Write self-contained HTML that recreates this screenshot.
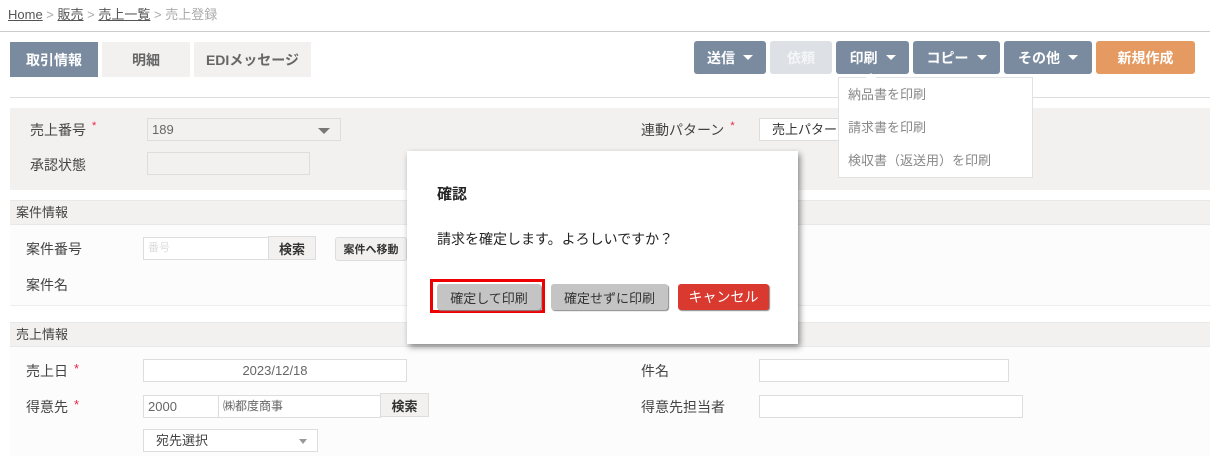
<!DOCTYPE html>
<html><head><meta charset="utf-8"><style>
*{box-sizing:border-box;margin:0;padding:0}
body{width:1210px;height:456px;background:#fff;font-family:"Liberation Sans","Noto Sans CJK JP",sans-serif;font-size:13px;color:#333;position:relative;overflow:hidden}
.a{position:absolute;white-space:nowrap}
.btn{position:absolute;height:33px;border-radius:3px;color:#fff;font-weight:bold;font-size:14px;display:flex;align-items:center;justify-content:center;background:#7a8ba0}
.car{display:inline-block;width:0;height:0;border-left:5px solid transparent;border-right:5px solid transparent;border-top:5px solid #fff;margin-left:8px}
.inp{position:absolute;background:#fff;border:1px solid #ddd;height:23px;font-size:13px;color:#777;padding-left:4px;line-height:21px;white-space:nowrap;overflow:hidden}
.sb{position:absolute;background:#f2f1f0;border:1px solid #ddd;height:24px;font-weight:bold;font-size:13px;display:flex;align-items:center;justify-content:center;color:#333}
.lbl{position:absolute;font-size:14px;color:#444}
.req{color:#e24;font-size:11px;margin-left:6px;vertical-align:top}
.hdr{position:absolute;left:10px;width:1200px;height:25px;background:#f2f1f0;border-top:1px solid #e8e8e8;border-bottom:1px solid #e8e8e8;padding-left:6px;line-height:24px;font-size:13px;color:#444}
.dbtn{position:absolute;height:26px;border-radius:3px;display:flex;align-items:center;justify-content:center;font-size:13px;box-shadow:1px 1px 1px #888}
</style></head><body>
<div class="a" style="left:8px;top:4px;color:#aaa;font-size:13px"><u style="color:#555">Home</u> &gt; <u style="color:#555">販売</u> &gt; <u style="color:#555">売上一覧</u> &gt; 売上登録</div>
<div class="a" style="left:0;top:31px;width:1210px;height:1px;background:#ccc"></div>

<div class="btn" style="left:10px;top:42px;width:88px;height:35px;border-radius:0;font-size:14px">取引情報</div>
<div class="btn" style="left:102px;top:42px;width:88px;height:35px;border-radius:0;background:#f2f1f0;color:#666">明細</div>
<div class="btn" style="left:194px;top:42px;width:117px;height:35px;border-radius:0;background:#f2f1f0;color:#666">EDIメッセージ</div>

<div class="btn" style="left:694px;top:41px;width:72px">送信<span class="car"></span></div>
<div class="btn" style="left:770px;top:41px;width:62px;background:#dde1e6;color:#f4f5f7">依頼</div>
<div class="btn" style="left:836px;top:41px;width:73px">印刷<span class="car"></span></div>
<div class="btn" style="left:913px;top:41px;width:87px">コピー<span class="car"></span></div>
<div class="btn" style="left:1004px;top:41px;width:88px">その他<span class="car"></span></div>
<div class="btn" style="left:1096px;top:41px;width:99px;background:#e59a62">新規作成</div>

<div class="a" style="left:10px;top:97px;width:1200px;height:1px;background:#ddd"></div>
<div class="a" style="left:10px;top:108px;width:1200px;height:82px;background:#f2f1f0"></div>

<div class="lbl" style="left:30px;top:120px">売上番号<span class="req">*</span></div>
<div class="inp" style="left:147px;top:118px;width:194px;background:#f2f1f0;color:#666">189<span style="position:absolute;right:10px;top:9px;border-left:6px solid transparent;border-right:6px solid transparent;border-top:6px solid #777"></span></div>
<div class="lbl" style="left:30px;top:155px">承認状態</div>
<div class="inp" style="left:147px;top:152px;width:163px;background:#f2f1f0"></div>
<div class="lbl" style="left:641px;top:120px">連動パターン<span class="req">*</span></div>
<div class="inp" style="left:759px;top:118px;width:90px;color:#333;padding-left:12px">売上パターン</div>

<div class="hdr" style="top:200px">案件情報</div>
<div class="a" style="left:10px;top:225px;width:1200px;height:81px;background:#fcfcfc;border-bottom:1px solid #eee"></div>
<div class="lbl" style="left:26px;top:239px">案件番号</div>
<div class="inp" style="left:143px;top:237px;width:126px;color:#ddd;font-size:11px">番号</div>
<div class="sb" style="left:268px;top:236px;width:48px">検索</div>
<div class="sb" style="left:335px;top:237px;width:72px;font-size:11px;border-radius:3px">案件へ移動</div>
<div class="lbl" style="left:26px;top:275px">案件名</div>

<div class="hdr" style="top:322px">売上情報</div>
<div class="a" style="left:10px;top:347px;width:1200px;height:109px;background:#fcfcfc"></div>
<div class="lbl" style="left:26px;top:361px">売上日<span class="req" style="font-size:13px">*</span></div>
<div class="inp" style="left:143px;top:359px;width:264px;text-align:center;padding:0;color:#666">2023/12/18</div>
<div class="lbl" style="left:26px;top:397px">得意先<span class="req" style="font-size:13px">*</span></div>
<div class="inp" style="left:143px;top:395px;width:76px;color:#666">2000</div>
<div class="inp" style="left:218px;top:395px;width:163px;color:#666;font-size:12px">㈱都度商事</div>
<div class="sb" style="left:380px;top:393px;width:49px">検索</div>
<div class="inp" style="left:143px;top:429px;width:175px;color:#444;padding-left:12px">宛先選択<span style="position:absolute;right:10px;top:9px;border-left:4px solid transparent;border-right:4px solid transparent;border-top:5px solid #999"></span></div>
<div class="lbl" style="left:641px;top:361px">件名</div>
<div class="inp" style="left:759px;top:359px;width:250px"></div>
<div class="lbl" style="left:641px;top:397px">得意先担当者</div>
<div class="inp" style="left:759px;top:395px;width:264px"></div>

<div class="a" style="left:838px;top:77px;width:195px;height:101px;background:#fff;border:1px solid #e2e2e2;color:#888;font-size:13px">
<div style="position:absolute;left:9px;top:6px">納品書を印刷</div>
<div style="position:absolute;left:9px;top:39px">請求書を印刷</div>
<div style="position:absolute;left:9px;top:72px">検収書（返送用）を印刷</div>
</div>
<div class="a" style="left:866px;top:73px;width:0;height:0;border-left:5px solid transparent;border-right:5px solid transparent;border-bottom:5px solid #fff"></div>

<div class="a" style="left:407px;top:151px;width:391px;height:193px;background:#fff;box-shadow:2px 3px 6px rgba(0,0,0,.45)">
<div style="position:absolute;left:30px;top:32px;font-weight:bold;font-size:15px;color:#222">確認</div>
<div style="position:absolute;left:30px;top:78px;font-size:14px;color:#222">請求を確定します。よろしいですか？</div>
<div style="position:absolute;left:23px;top:128px;width:115px;height:34px;border:3px solid #e00"></div>
<div class="dbtn" style="left:30px;top:133px;width:104px;background:#c4c4c4;color:#333">確定して印刷</div>
<div class="dbtn" style="left:144px;top:133px;width:117px;background:#c4c4c4;color:#333">確定せずに印刷</div>
<div class="dbtn" style="left:271px;top:133px;width:91px;background:#d9392e;color:#fff;font-size:14px">キャンセル</div>
</div>
</body></html>
